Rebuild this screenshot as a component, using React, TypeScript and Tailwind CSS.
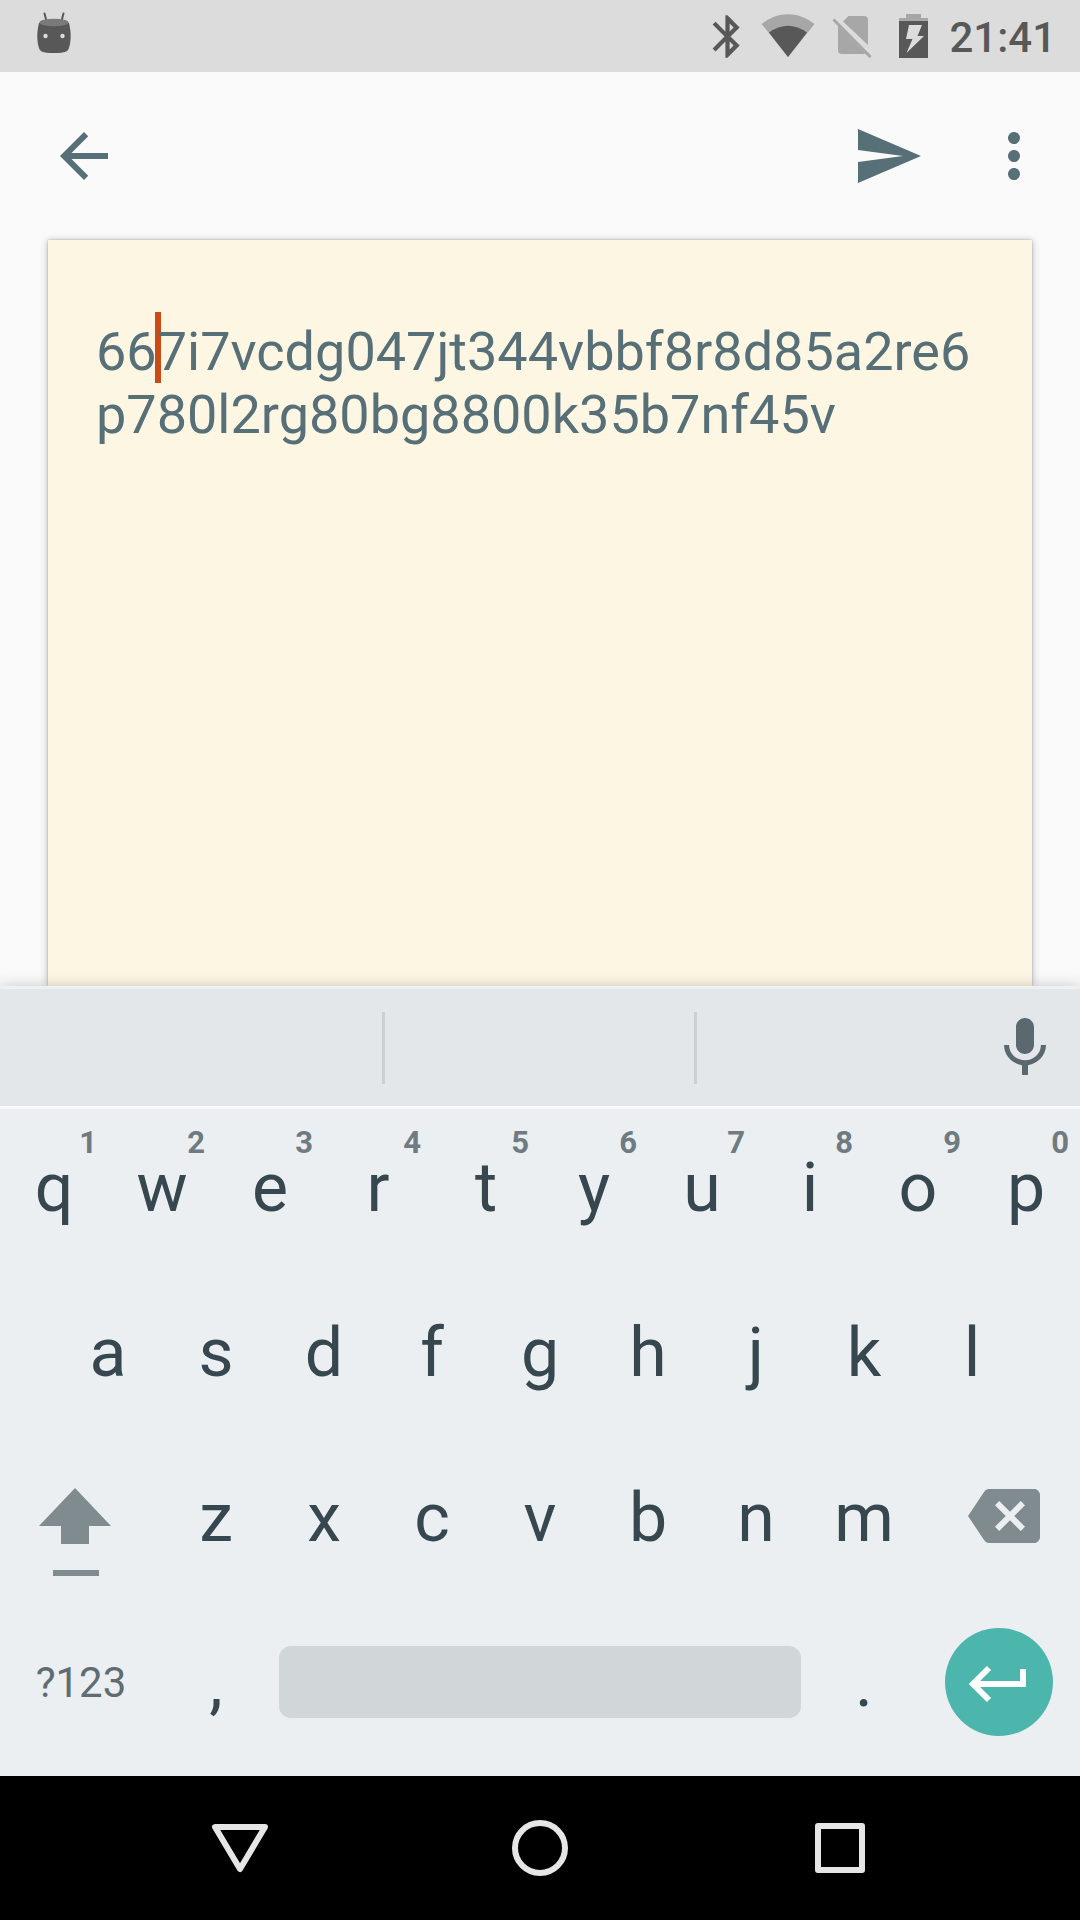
import { useState } from "react";

const TOP_ROW = ["q", "w", "e", "r", "t", "y", "u", "i", "o", "p"];
const HINTS = ["1", "2", "3", "4", "5", "6", "7", "8", "9", "0"];
const HOME_ROW = ["a", "s", "d", "f", "g", "h", "j", "k", "l"];
const BOTTOM_ROW = ["z", "x", "c", "v", "b", "n", "m"];

function Icon({ d }: { d: string }) {
  return (
    <svg viewBox="0 0 24 24" className="size-[72px]" fill="currentColor" aria-hidden="true">
      <path d={d} />
    </svg>
  );
}

function StatusBar() {
  return (
    <header className="flex h-[72px] items-start bg-[#dcdcdc] pl-9 pr-6 text-[#585858]">
      <svg viewBox="0 0 36 42" className="mt-3 h-[42px] w-9" aria-hidden="true">
        <path d="M8.5 1.5 10.5 9M27.500 1.500 25.500 9" stroke="#585858" strokeWidth="2" strokeLinecap="round" />
        <path d="M3 11C1 19 .5 28 3 36c.8 3 3 5 15 5s14.200-2 15-5c2.500-8 2-17 0-25-2-2-28-2-30 0z" fill="#585858" />
        <ellipse cx="18" cy="10.500" rx="14.500" ry="3.800" fill="#7a7a7a" />
        <circle cx="9.500" cy="24" r="2.200" fill="#dcdcdc" />
        <circle cx="26.500" cy="24" r="2.200" fill="#dcdcdc" />
      </svg>
      <div className="ml-auto flex h-[72px] items-center">
        <svg viewBox="0 0 24 24" className="size-[51px]" fill="currentColor" aria-hidden="true">
          <path d="M17.71 7.71 12 2h-1v7.590L6.410 5 5 6.410 10.590 12 5 17.590 6.410 19 11 14.410V22h1l5.710-5.710-4.300-4.290 4.300-4.290zM13 5.830l1.880 1.880L13 9.590V5.830zm1.880 10.460L13 18.170v-3.760l1.880 1.880z" />
        </svg>
        <svg viewBox="0 0 54 44" className="ml-2 h-11 w-[54px]" aria-hidden="true">
          <path d="M.5 10C17-3 37-3 53.500 10L27 43z" fill="#a7a7a7" />
          <path d="M8 18.500Q27 5 46 18.500L27 43z" fill="#585858" />
        </svg>
        <svg viewBox="0 0 42 44" className="ml-4 h-11 w-[42px]" aria-hidden="true">
          <path d="M12 7.500 17.500 2H33q4 0 4 4v25zM7 11.500 34 39.500Q33 40 31 40H11q-4 0-4-4z" fill="#a7a7a7" />
          <path d="M2.500 5.500 39.500 43" stroke="#a7a7a7" strokeWidth="3" />
        </svg>
        <svg viewBox="0 0 29 44" className="ml-[26px] h-11 w-[29px]" aria-hidden="true">
          <path d="M7 0h15v4h7v3H0V4h7z" fill="#a7a7a7" />
          <path d="M0 7h29v37H0z" fill="#585858" />
          <path d="M10 11h13l-4.500 11H25L7.500 39l6-14H7z" fill="#dcdcdc" />
        </svg>
        <time className="ml-[21px] pt-1 text-[42px] leading-[48px] font-medium">21:41</time>
      </div>
    </header>
  );
}

function AppBar() {
  return (
    <nav className="flex h-[168px] items-center pl-12 pr-[30px] text-[#576f76]">
      <button aria-label="Back">
        <Icon d="M20 11H7.830l5.590-5.590L12 4l-8 8 8 8 1.410-1.410L7.830 13H20v-2z" />
      </button>
      <button aria-label="Send" className="ml-auto">
        <Icon d="M2.010 21 23 12 2.010 3 2 10l15 2-15 2z" />
      </button>
      <button aria-label="More options" className="ml-[54px]">
        <Icon d="M12 8c1.100 0 2-.9 2-2s-.9-2-2-2-2 .9-2 2 .9 2 2 2zm0 2c-1.100 0-2 .9-2 2s.9 2 2 2 2-.9 2-2-.9-2-2-2zm0 6c-1.100 0-2 .9-2 2s.9 2 2 2 2-.9 2-2-.9-2-2-2z" />
      </button>
    </nav>
  );
}

function Note() {
  const [text, setText] = useState("667i7vcdg047jt344vbbf8r8d85a2re6p780l2rg80bg8800k35b7nf45v");
  return (
    <main className="flex flex-1 px-12">
      <div className="relative flex flex-1 bg-[#fdf6e3] shadow-[0_1px_8px_rgba(0,0,0,0.25),0_0_2px_rgba(0,0,0,0.25)]">
        <span className="absolute top-[72px] left-[107px] h-[71px] w-[6px] bg-[#cb4b16]" />
        <textarea
          aria-label="Note"
          spellCheck={false}
          value={text}
          onChange={(e) => setText(e.target.value)}
          className="relative flex-1 resize-none overflow-hidden bg-transparent px-12 pt-20 text-[54px] leading-[63px] break-all text-[#576f76] caret-[#cb4b16] outline-none"
        />
      </div>
    </main>
  );
}

function Key({ label, hint }: { label: string; hint?: string }) {
  return (
    <button className="relative col-span-2 flex items-center justify-center text-[68px] leading-[80px] text-[#37474f]">
      {label}
      {hint && (
        <span className="absolute top-4 right-[11px] text-[31px] leading-9 font-bold text-[#6f7b81]">{hint}</span>
      )}
    </button>
  );
}

function Keyboard() {
  return (
    <section aria-label="Keyboard" className="relative bg-[#ebeff2] shadow-[0_0_14px_rgba(0,0,0,0.2)]">
      <div className="flex h-[123px] items-center border-y-[3px] border-t-[#eef1f2] border-b-[#f7f9fa] bg-[#e3e7ea]">
        <div className="flex-[382]" />
        <div className="h-[72px] w-[3px] bg-[#ccd0d3]" />
        <div className="flex-[309]" />
        <div className="h-[72px] w-[3px] bg-[#ccd0d3]" />
        <div className="flex-[292]" />
        <button aria-label="Voice input" className="w-[91px] text-[#5b686f]">
          <Icon d="M12 14c1.660 0 2.990-1.340 2.990-3L15 5c0-1.660-1.340-3-3-3S9 3.340 9 5v6c0 1.660 1.340 3 3 3zm5.300-3c0 3-2.540 5.100-5.300 5.100S6.700 14 6.700 11H5c0 3.410 2.720 6.230 6 6.720V21h2v-3.280c3.280-.48 6-3.300 6-6.720h-1.700z" />
        </button>
      </div>
      <div className="grid auto-rows-[158px] grid-cols-20 gap-y-[7px] pb-[14px]">
        {TOP_ROW.map((k, i) => (
          <Key key={k} label={k} hint={HINTS[i]} />
        ))}

        <div />
        {HOME_ROW.map((k) => (
          <Key key={k} label={k} />
        ))}
        <div />

        <button aria-label="Shift" className="col-span-3 flex items-center justify-center pr-3">
          <svg viewBox="0 -28 72 116" className="h-[116px] w-[72px]" fill="#808b8f" aria-hidden="true">
            <path d="M36 0 72 38H50V56H22V38H0z" />
            <path d="M14 82h46v6H14z" />
          </svg>
        </button>
        {BOTTOM_ROW.map((k) => (
          <Key key={k} label={k} />
        ))}
        <button aria-label="Backspace" className="col-span-3 flex items-center justify-center pb-1 pl-[10px] text-[#808b8f]">
          <Icon d="M22 3H7c-.69 0-1.230.35-1.590.88L0 12l5.410 8.110c.36.53.9.89 1.590.89h15c1.100 0 2-.9 2-2V5c0-1.100-.9-2-2-2zm-3 12.590L17.590 17 14 13.410 10.410 17 9 15.590 12.590 12 9 8.410 10.410 7 14 10.590 17.590 7 19 8.410 15.410 12 19 15.590z" />
        </button>

        <button className="col-span-3 text-[42px] leading-[48px] text-[#5f6c71]">?123</button>
        <Key label="," />
        <div className="col-span-10 flex items-center px-[9px] pb-[2px]">
          <button aria-label="Space" className="h-[72px] flex-1 rounded-xl bg-[#d1d6d9]" />
        </div>
        <Key label="." />
        <div className="col-span-3 flex items-center justify-center pb-[2px]">
          <button aria-label="Enter" className="size-[108px] rounded-full bg-[#4db6ac]">
            <svg viewBox="0 0 108 108" className="size-[108px]" fill="none" stroke="#fff" strokeWidth="6" aria-hidden="true">
              <path d="M28 56H78V41" />
              <path d="M44 40 28 56 44 72" />
            </svg>
          </button>
        </div>
      </div>
    </section>
  );
}

function NavigationBar() {
  return (
    <nav className="relative flex h-36 bg-black px-[90px]">
      <button aria-label="Hide keyboard" className="flex flex-1 items-center justify-center">
        <svg viewBox="0 0 60 60" className="size-[60px]" fill="none" stroke="#e6e6e6" strokeWidth="6" strokeLinejoin="round">
          <path d="M5 9H55L30 51z" />
        </svg>
      </button>
      <button aria-label="Home" className="flex flex-1 items-center justify-center">
        <svg viewBox="0 0 60 60" className="size-[60px]" fill="none" stroke="#e6e6e6" strokeWidth="6">
          <circle cx="30" cy="30" r="25" />
        </svg>
      </button>
      <button aria-label="Overview" className="flex flex-1 items-center justify-center">
        <svg viewBox="0 0 60 60" className="size-[60px]" fill="none" stroke="#e6e6e6" strokeWidth="6" strokeLinejoin="round">
          <path d="M8 8H52V52H8z" />
        </svg>
      </button>
    </nav>
  );
}

export default function App() {
  return (
    <div className="flex min-h-screen flex-col bg-[#fafafa] font-['Roboto',sans-serif]">
      <StatusBar />
      <AppBar />
      <Note />
      <Keyboard />
      <NavigationBar />
    </div>
  );
}
